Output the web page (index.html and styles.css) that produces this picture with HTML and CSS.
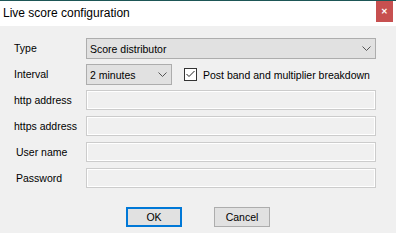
FILE: index.html
```html
<!DOCTYPE html>
<html>
<head>
<meta charset="utf-8">
<link rel="stylesheet" href="styles.css">
</head>
<body>
<div class="window">
  <div class="titlebar">
    <span class="title">Live score configuration</span>
    <div class="close">&#x2715;</div>
  </div>
  <div class="content">
    <div class="form">
      <div class="label">Type</div>
      <div class="combo wide"><span>Score distributor</span>
        <svg class="chev" width="9" height="5" viewBox="0 0 9 5"><path d="M0.5 0.5 L4.5 4.5 L8.5 0.5" fill="none" stroke="#555" stroke-width="1"/></svg>
      </div>
      <div class="label">Interval</div>
      <div class="inline">
        <div class="combo small"><span>2 minutes</span>
          <svg class="chev" width="9" height="5" viewBox="0 0 9 5"><path d="M0.5 0.5 L4.5 4.5 L8.5 0.5" fill="none" stroke="#555" stroke-width="1"/></svg>
        </div>
        <div class="check">
          <div class="box"><svg width="11" height="11" viewBox="0 0 11 11"><path d="M1.5 5 L4 7.5 L9.5 2" fill="none" stroke="#222" stroke-width="1"/></svg></div>
          <span>Post band and multiplier breakdown</span>
        </div>
      </div>
      <div class="label">http address</div>
      <div class="field"></div>
      <div class="label">https address</div>
      <div class="field"></div>
      <div class="label indent">User name</div>
      <div class="field"></div>
      <div class="label indent">Password</div>
      <div class="field"></div>
    </div>
    <div class="buttons">
      <div class="btn default">OK</div>
      <div class="btn">Cancel</div>
    </div>
  </div>
</div>
</body>
</html>
```
FILE: styles.css
```css
html, body {
  margin: 0;
  padding: 0;
}
body {
  width: 396px;
  height: 233px;
  overflow: hidden;
  font-family: "Liberation Sans", Arial, sans-serif;
  font-size: 10.5px;
  color: #000;
}
.window {
  width: 396px;
  height: 233px;
  background: #f0f0f0;
  border-top: 1px solid #1d5656;
  box-sizing: border-box;
}
.titlebar {
  height: 25px;
  background: #fff;
  display: flex;
  align-items: flex-start;
  justify-content: space-between;
}
.title {
  font-size: 12px;
  margin-left: 3px;
  line-height: 24px;
}
.close {
  width: 17px;
  height: 21px;
  margin-right: 3px;
  background: #c75050;
  color: #fff;
  font-size: 8px;
  font-weight: bold;
  display: flex;
  align-items: center;
  justify-content: center;
}
.content {
  padding: 12px 0 0 14px;
}
.form {
  display: grid;
  grid-template-columns: 72px 290px;
  grid-auto-rows: 26px;
  align-items: start;
}
.label {
  line-height: 21px;
  height: 21px;
}
.label.indent {
  padding-left: 2px;
}
.combo {
  height: 21px;
  box-sizing: border-box;
  border: 1px solid #adadad;
  background: #e1e1e1;
  display: flex;
  align-items: center;
  justify-content: space-between;
  padding: 0 4px 0 3px;
}
.combo.small {
  width: 86px;
}
.inline {
  display: flex;
  align-items: center;
  height: 21px;
}
.check {
  display: flex;
  align-items: center;
  margin-left: 12px;
}
.box {
  width: 13px;
  height: 13px;
  box-sizing: border-box;
  border: 1px solid #333;
  background: #fff;
  display: flex;
  align-items: center;
  justify-content: center;
  margin-right: 6px;
}
.box svg {
  display: block;
}
.field {
  height: 20px;
  box-sizing: border-box;
  border: 1px solid #cccccc;
  box-shadow: inset 0 0 0 1px #ffffff;
  background: #f0f0f0;
}
.buttons {
  display: flex;
  justify-content: center;
  gap: 32px;
  margin-top: 13px;
  padding-right: 14px;
}
.btn {
  width: 56px;
  height: 20px;
  box-sizing: border-box;
  border: 1px solid #adadad;
  background: #e1e1e1;
  display: flex;
  align-items: center;
  justify-content: center;
}
.btn.default {
  border: 2px solid #0078d7;
}
```
